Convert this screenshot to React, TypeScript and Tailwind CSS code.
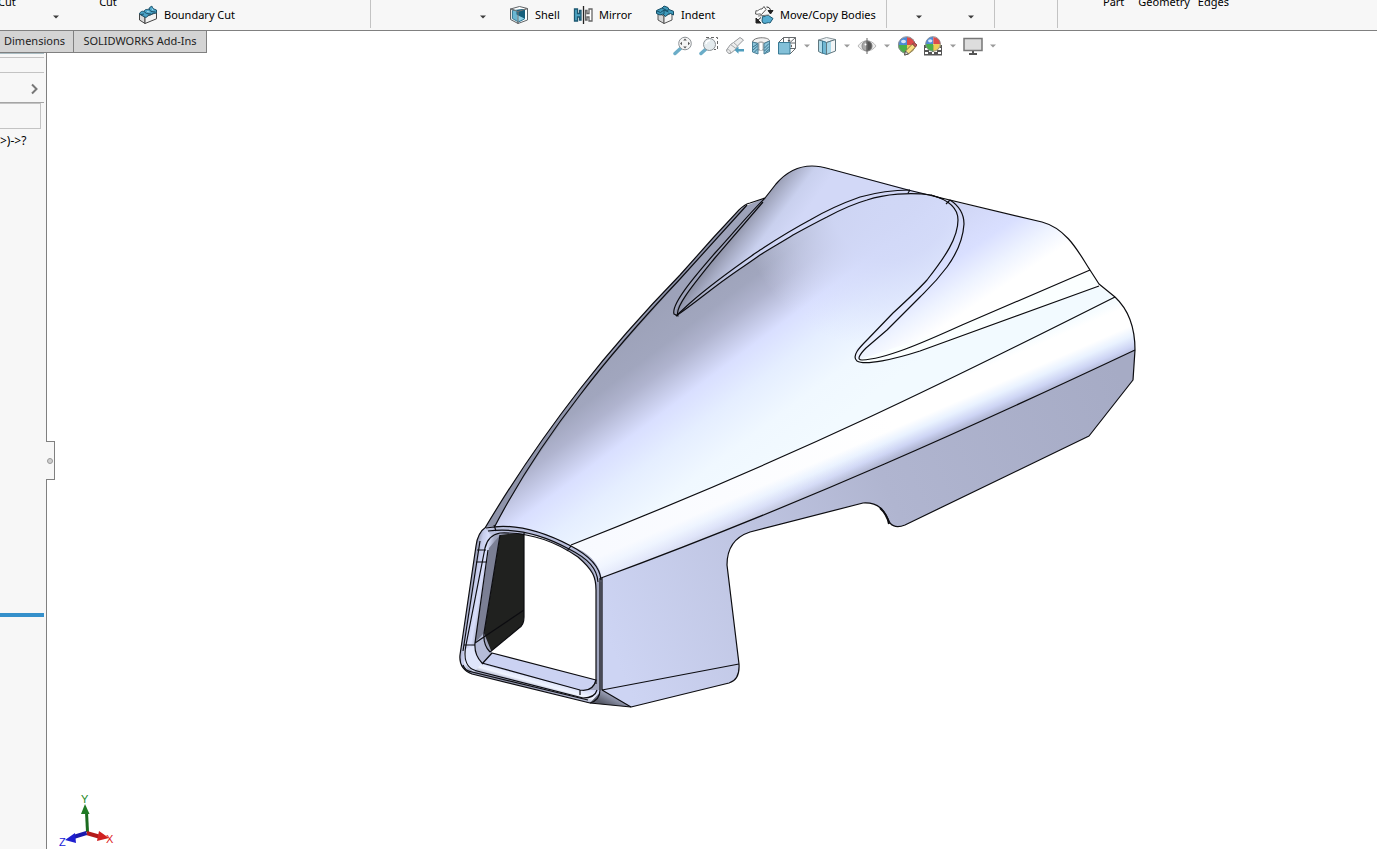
import type { ReactNode } from "react";

interface IconProps {
  children: ReactNode;
}

function Icon({ children }: IconProps) {
  return (
    <svg viewBox="0 0 20 20" className="size-5 shrink-0" fill="none" stroke="#5f6366" aria-hidden="true">
      {children}
    </svg>
  );
}

function Caret({ color = "#3c3c3c" }: { color?: string }) {
  return (
    <svg viewBox="0 0 8 4" className="h-1 w-2" aria-hidden="true">
      <path d="M1 0.5h6L4 3.5z" fill={color} />
    </svg>
  );
}

const boundaryIcon = (
  <Icon>
    <path d="M1.500 9 7 12v6.500L1.500 15z" fill="#d9d9d9" stroke="#444" />
    <path d="M7 12 18.500 7.500v6.300L7 18.500z" fill="#f2f2f2" stroke="#444" />
    <path
      d="M1.500 9c1-3 3-3 4.500-2.500C7 3.500 9.500 5 11 4c.8-2 2-3 3.200-2.500.3 2 2 2.800 4.300 3.500v2.800c-2 1-3-.4-4.500 1.200-1.500 1.500-3 .2-4 1.500-.8 1.800-2 2-3 1.700z"
      fill="#4aa3c7"
      stroke="#1d5068"
    />
    <path d="m6 6.500 2.500 2L13 9M11 4l2 2.500 4.500.5M3 9.500l3-.5" stroke="#1d5068" />
    <path d="M9 6.500 11.500 7M14 3.500l1 2" stroke="#a5dcf0" />
  </Icon>
);

const shellIcon = (
  <Icon>
    <path d="m1.500 4 9-2.500 8 2-9.500 3z" fill="#fff" />
    <path d="M1.500 4 9 6.500v12l-7.500-4z" fill="#e4e4e4" />
    <path d="m9 6.500 9.500-3V15L9 18.500z" fill="#fff" />
    <path d="M3.500 5.500 15.500 4.500v9.500l-6 3-6-3.500z" fill="#6bb7d2" stroke="#3a7f9b" />
    <path d="m8 5.500 7.500-1v8.500L8 9.500z" fill="#155f7c" stroke="#155f7c" />
    <path d="m8 10 7 3.500L9.500 16z" fill="#8fd0e6" stroke="none" />
    <path d="M1.500 4 9 6.500v12M9 6.500l9.500-3" stroke="#777" />
  </Icon>
);

const mirrorIcon = (
  <Icon>
    <path d="M1.500 4h3v4.500h2v-3H8v9.500H6.500v-3h-2V16h-3z" fill="#4ea6c6" stroke="#1c5871" strokeWidth="1.300" />
    <path d="M10.500 1v18" stroke="#222" strokeWidth="1.300" />
    <path d="M19 4h-3v4.500h-2v-3h-1.500v9.500H14v-3h2V16h3z" fill="#fff" stroke="#666" strokeWidth="1.300" />
  </Icon>
);

const indentIcon = (
  <Icon>
    <path d="m3 8 6 3v7.500L3 15z" fill="#d5d5d5" stroke="#555" />
    <path d="m9 11 8-3v7l-8 3.500z" fill="#f4f4f4" stroke="#555" />
    <path d="M1.500 5.500 7 3l2-2 4 1.500 1 2 4.500 1.800V10l-3-1.500-2 .5-3 2.500L8 9l-3 1-3.500-1.500z" fill="#3f9abb" stroke="#164e66" />
    <path d="m2 6 3.500 1.500L9 5l4.500 2M7 3l5 2.500 2-1M9 5v4" stroke="#164e66" />
  </Icon>
);

const moveCopyIcon = (
  <Icon>
    <path d="M2 5.500c2 1.500 3-2 6-1.500l2-2.500 2 3-4.500 5C5 8 4 10 1.500 9z" fill="#fff" stroke="#555" />
    <path d="M8.500 11.500c2.500 1.300 3-2 6-1l4.500 3-3 4.500c-2.500-1.500-4 1.500-7 0l-1-2z" fill="#55acd0" stroke="#1c5871" />
    <path d="M12.500 2c2.500 0 4 1.500 4 4" stroke="#222" />
    <path d="M14 5.500h5L16.500 9zM2 13v5h5zm1 3 4-3.500" fill="#222" stroke="#222" />
    <path d="m4 11 11-1" stroke="#777" />
  </Icon>
);

const zoomFitIcon = (
  <Icon>
    <path d="m2 17.500 5.500-5" stroke="#6badc8" strokeWidth="3.500" strokeLinecap="round" />
    <circle cx="12" cy="7.500" r="6.300" fill="#f5f5f5" stroke="#8d9296" />
    <path d="m12 2.500 1.800 2h-3.600zm0 10 1.800-2h-3.600zM7 7.500l2-1.800v3.600zm10 0-2-1.800v3.600z" fill="#555" stroke="none" />
  </Icon>
);

const zoomAreaIcon = (
  <Icon>
    <path d="M7 1.500h11.500v12H15" strokeDasharray="3 2" stroke="#666" />
    <path d="m2 17.500 5-4.500" stroke="#6badc8" strokeWidth="3.500" strokeLinecap="round" />
    <circle cx="10.500" cy="8.500" r="6" fill="#e4ebee" stroke="#8d9296" />
    <path d="M7 8a4 4 0 0 1 4-3.500" stroke="#fff" strokeWidth="1.500" />
  </Icon>
);

const previousViewIcon = (
  <Icon>
    <path d="m1.500 14 4-5.500 3-2L15 1.500l3.500 2.500-6 6-1.500 3-5.500 4.500c-2 .5-4-1.500-4-3.500z" fill="#ededed" stroke="#96999c" />
    <path d="m5.500 8.500 5.500 4M8.500 6.500l4 3.500M2 14c1.500-1 3.500 0 3.500 3" stroke="#a5a8aa" />
    <path d="m9.500 14 4-3.500V13h5.500v2.500h-5.500v2.300z" fill="#4f9dbd" stroke="none" />
  </Icon>
);

const sectionIcon = (
  <Icon>
    <path d="M1.500 6C2 .5 18.500.5 18.500 5l-5.500 2.500H7z" fill="#f1f1f1" stroke="#777" />
    <path d="M7 7.500c0-2 6-2 6 0V14H7z" fill="#d7d9da" stroke="#999" />
    <path d="M10 7v7" stroke="#fff" strokeWidth="2" />
    <path d="m1.500 6 5.500 1.500v10.500l-5.500-2zM13 7.500 18.500 5v10.500L13 18z" fill="#8cc5db" stroke="#4b7f96" />
    <path d="m2 11 4.500-3m-4.500 6 4.500-4m-3 6 3-3m7-1 4.500-4.500M13.500 15l4.500-4.500m-3.500 6 3.500-3" stroke="#39718a" />
  </Icon>
);

const orientationIcon = (
  <Icon>
    <path d="M6.500 1.500h12v11h-12zM1.500 6.500l5-5M13 6.500l5.500-5M13 18l5.500-5.500M12 1.500v5M18 7h-5" stroke="#65696c" />
    <path d="m10.500 4 1.500 2 1.500-2zM15 8.500 13.500 10l1.500 1.500z" fill="#555" stroke="none" />
    <path d="M1.500 6.500H13V18H1.500z" fill="#83c0d8" stroke="#397a95" />
  </Icon>
);

const displayStyleIcon = (
  <Icon>
    <path d="m1.500 4 8-2.500 9 2-9 3z" fill="#edf2f4" stroke="#8a979c" />
    <path d="m1.500 4 4 1v12.500l-4-2z" fill="#b0dbe9" stroke="#60777f" />
    <path d="m5.500 5 4 1.500v12l-4-1.500z" fill="#71b8d3" stroke="#397a95" />
    <path d="m9.500 6.500 4.500-1.500v12l-4.500 1.500z" fill="#a8d8e8" stroke="none" />
    <path d="m14 5 4.500-1.500V15L14 17z" fill="#f3f5f6" stroke="none" />
    <path d="m9.500 6.500 9-3V15l-9 3.500z" stroke="#60777f" />
  </Icon>
);

const hideShowIcon = (
  <Icon>
    <path d="M1 10c4.500-7 13.500-7 18 0-4.500 6.500-13.500 6.500-18 0z" fill="#ededed" stroke="#b9b9b9" />
    <path d="M10 5v10a5 5 0 0 1 0-10z" fill="#aaa" stroke="#888" />
    <path d="M10 5v10a5 5 0 0 0 0-10z" fill="#555" stroke="#777" />
    <path d="M10 2v16" stroke="#666" />
    <circle cx="8.500" cy="8.500" r="1" fill="#fff" stroke="none" />
  </Icon>
);

const ball = (
  <>
    <path d="M10 9V1a8.500 8.500 0 0 0-9 8z" fill="#4e8ad8" stroke="none" />
    <path d="M10 9V1a8.500 8.500 0 0 1 8.500 8z" fill="#dc4b4b" stroke="none" />
    <path d="M10 9v8.500A8.500 8.500 0 0 1 1 9z" fill="#4aaf4b" stroke="none" />
    <path d="M10 9v8.500A8.500 8.500 0 0 0 18.500 9z" fill="#efcd55" stroke="none" />
    <circle cx="9.700" cy="9" r="8.300" stroke="#8b8f92" />
    <ellipse cx="6.500" cy="5.500" rx="2.500" ry="1.800" fill="#d6e6fa" stroke="none" />
  </>
);

const appearanceIcon = (
  <Icon>
    {ball}
    <path d="m8.500 15 7-7 3 3-7 7-4 1z" fill="#f8df83" stroke="#8b7440" />
    <path d="m15.500 8 1.500-1.500 3 2.500-1.500 2z" fill="#c95858" stroke="#884040" />
    <path d="m8.500 15 3 3-4 1z" fill="#ddd" stroke="#555" />
  </Icon>
);

const sceneIcon = (
  <Icon>
    <path d="M1 9h18v10.500H1z" fill="#555" stroke="none" />
    <path d="M2 12h3v2H2zm0 4h3v2H2zm4-2h3v2H6zm5 0h3v2h-3zm4-2h3v2h-3zm0 4h3v2h-3zm-6 0h2v2H9z" fill="#fff" stroke="none" />
    <g transform="translate(1.500 0) scale(.88)">{ball}</g>
  </Icon>
);

const viewSettingsIcon = (
  <Icon>
    <path d="M1 2.500h18v12H1z" fill="#ddd" stroke="#777" strokeWidth="1.500" />
    <path d="M10 15v2.500M6 18h8" stroke="#555" strokeWidth="2" />
  </Icon>
);

interface HudItem {
  label: string;
  icon?: ReactNode;
}

const hudItems: HudItem[] = [
  { label: "Zoom to Fit", icon: zoomFitIcon },
  { label: "Zoom to Area", icon: zoomAreaIcon },
  { label: "Previous View", icon: previousViewIcon },
  { label: "Section View", icon: sectionIcon },
  { label: "View Orientation", icon: orientationIcon },
  { label: "View Orientation options" },
  { label: "Display Style", icon: displayStyleIcon },
  { label: "Display Style options" },
  { label: "Hide/Show Items", icon: hideShowIcon },
  { label: "Hide/Show Items options" },
  { label: "Edit Appearance", icon: appearanceIcon },
  { label: "Apply Scene", icon: sceneIcon },
  { label: "Apply Scene options" },
  { label: "View Settings", icon: viewSettingsIcon },
  { label: "View Settings options" },
];

function RibbonButton({ icon, label }: { icon: ReactNode; label: string }) {
  return (
    <button className="flex h-7 items-center gap-1.5 pt-0.5 whitespace-nowrap">
      {icon}
      {label}
    </button>
  );
}

// Label of a tall ribbon button, its icon is scrolled off above
function TallLabel({ label }: { label: string }) {
  return <button className="-mt-1.5 h-4 leading-4 whitespace-nowrap">{label}</button>;
}

function CaretButton({ label }: { label: string }) {
  return (
    <button aria-label={label} className="mt-[15px] flex h-2 w-4 justify-center">
      <Caret />
    </button>
  );
}

function Ribbon() {
  return (
    <header className="flex h-[31px] shrink-0 items-start overflow-hidden border-b border-[#808080] bg-[#f7f7f7]">
      <div className="grid h-7 w-[371px] shrink-0 grid-cols-[14px_84px_20px_auto] items-start border-r border-[#c3c3c3]">
        <div className="-ml-0.5 flex">
          <TallLabel label="Cut" />
        </div>
        <div className="flex justify-center">
          <CaretButton label="Hole Wizard options" />
        </div>
        <TallLabel label="Cut" />
        <div className="pl-5">
          <RibbonButton icon={boundaryIcon} label="Boundary Cut" />
        </div>
      </div>
      <div className="flex h-7 w-[516px] shrink-0 items-start border-r border-[#c3c3c3] pl-26">
        <CaretButton label="Pattern options" />
        <div className="ml-[18px] grid grid-cols-[64px_82px_99px_auto]">
          <RibbonButton icon={shellIcon} label="Shell" />
          <RibbonButton icon={mirrorIcon} label="Mirror" />
          <RibbonButton icon={indentIcon} label="Indent" />
          <RibbonButton icon={moveCopyIcon} label="Move/Copy Bodies" />
        </div>
      </div>
      <div className="flex h-7 w-27 shrink-0 gap-9 border-r border-[#c3c3c3] pl-6">
        <CaretButton label="Reference Geometry options" />
        <CaretButton label="Curves options" />
      </div>
      <div className="h-7 w-[63px] shrink-0 border-r border-[#c3c3c3]" />
      <div className="flex gap-x-3.5 pl-[45px]">
        <TallLabel label="Part" />
        <TallLabel label="Geometry" />
        <div className="-ml-1.5 flex">
          <TallLabel label="Edges" />
        </div>
      </div>
    </header>
  );
}

function HeadsUpToolbar() {
  return (
    <div className="ml-[466px] flex h-[22px] items-end gap-1.5">
      {hudItems.map((item) => (
        <button key={item.label} aria-label={item.label} className="-mb-[3px] flex h-5 items-center">
          {item.icon ?? <Caret color="#9a9a9a" />}
        </button>
      ))}
    </div>
  );
}

function SidePanel() {
  return (
    <aside className="w-[47px] shrink-0 overflow-hidden border-r border-[#808080] bg-[#f7f7f7]">
      <div className="mr-0.5">
        <div className="h-[5px] border-t border-b border-t-[#a9bcc2] border-b-[#c3c3c3]" />
        <div className="h-[15px] border-b border-[#c3c3c3]" />
        <button
          aria-label="More tabs"
          className="flex h-[30px] w-full items-center justify-end border-b border-[#a5a5a5] pt-0.5 pr-1.5"
        >
          <svg viewBox="0 0 7 12" className="h-3 w-[7px]" aria-hidden="true">
            <path d="m1 1.500 4.500 4.500L1 10.500" fill="none" stroke="#777" strokeWidth="2" />
          </svg>
        </button>
      </div>
      <input
        aria-label="Filter"
        className="block h-[26px] w-[41px] border border-l-0 border-[#c3c3c3] bg-[#f7f7f7] px-1 outline-none"
      />
      <p className="mt-1 h-4 text-xs leading-4 whitespace-nowrap [font-variant-ligatures:none]">{">)->?"}</p>
      <div className="mt-[464px] mr-[2px] h-1 bg-[#3590cb]" />
    </aside>
  );
}

function HoodModel() {
  return (
    <svg viewBox="47 53 1330 796" className="block size-full" role="img" aria-label="Hood model">
      <defs>
        <linearGradient id="top" gradientUnits="userSpaceOnUse" x1="600" y1="350" x2="720" y2="510">
          <stop offset="0" stopColor="#9da2b9" />
          <stop offset=".17" stopColor="#a1a6be" />
          <stop offset=".27" stopColor="#b0b4cf" />
          <stop offset=".44" stopColor="#d9dfff" />
          <stop offset=".6" stopColor="#e5eeff" />
          <stop offset=".8" stopColor="#f0f8ff" />
          <stop offset="1" stopColor="#f2faff" />
        </linearGradient>
        <radialGradient id="crest" gradientUnits="userSpaceOnUse" cx="890" cy="200" r="150">
          <stop offset="0" stopColor="#d0d7f6" />
          <stop offset=".4" stopColor="#d2d9f8" stopOpacity=".9" />
          <stop offset=".7" stopColor="#d6ddfb" stopOpacity=".5" />
          <stop offset="1" stopColor="#dbe2ff" stopOpacity="0" />
        </radialGradient>
        <linearGradient id="band" gradientUnits="userSpaceOnUse" x1="860" y1="413" x2="883" y2="466">
          <stop offset="0" stopColor="#f6fcff" />
          <stop offset=".15" stopColor="#ffffff" />
          <stop offset=".48" stopColor="#ffffff" />
          <stop offset=".65" stopColor="#e9f2ff" />
          <stop offset=".82" stopColor="#cdd4f4" />
          <stop offset="1" stopColor="#a4a9c4" />
        </linearGradient>
        <linearGradient id="bandFade" gradientUnits="userSpaceOnUse" x1="600" y1="570" x2="900" y2="440">
          <stop offset="0" stopColor="#f4f7ff" stopOpacity=".65" />
          <stop offset="1" stopColor="#f4f7ff" stopOpacity="0" />
        </linearGradient>
        <linearGradient id="side" gradientUnits="userSpaceOnUse" x1="600" y1="620" x2="1130" y2="400">
          <stop offset="0" stopColor="#cdd4f3" />
          <stop offset=".3" stopColor="#bec4e1" />
          <stop offset=".55" stopColor="#b0b5d0" />
          <stop offset="1" stopColor="#a6abc5" />
        </linearGradient>
        <linearGradient id="leftCowl" gradientUnits="userSpaceOnUse" x1="760" y1="197" x2="796" y2="224">
          <stop offset="0" stopColor="#8d91a6" />
          <stop offset=".2" stopColor="#a3a8c0" />
          <stop offset=".6" stopColor="#c9d0ee" />
          <stop offset="1" stopColor="#d2d8f7" />
        </linearGradient>
        <linearGradient id="rightCowl" gradientUnits="userSpaceOnUse" x1="960" y1="207" x2="1010" y2="282">
          <stop offset="0" stopColor="#d0d6f5" />
          <stop offset=".45" stopColor="#d9dfff" />
          <stop offset=".75" stopColor="#eef3ff" />
          <stop offset="1" stopColor="#ffffff" />
        </linearGradient>
        <linearGradient id="tube" gradientUnits="userSpaceOnUse" x1="466" y1="600" x2="484" y2="603">
          <stop offset="0" stopColor="#8a8ea5" />
          <stop offset=".35" stopColor="#c7cdec" />
          <stop offset=".65" stopColor="#d9dffb" />
          <stop offset="1" stopColor="#a0a5be" />
        </linearGradient>
        <linearGradient id="sill" gradientUnits="userSpaceOnUse" x1="528" y1="672" x2="523" y2="690">
          <stop offset="0" stopColor="#cfd6f5" />
          <stop offset=".45" stopColor="#f1f5ff" />
          <stop offset=".7" stopColor="#a9aec8" />
          <stop offset="1" stopColor="#4c4f5c" />
        </linearGradient>
        <linearGradient id="corner" gradientUnits="userSpaceOnUse" x1="616" y1="690" x2="608" y2="706">
          <stop offset="0" stopColor="#c3c9e6" />
          <stop offset="1" stopColor="#565a68" />
        </linearGradient>
      </defs>

      {/* Shaded faces */}
      <path
        d="M601 578C800 505 980 423 1135 350L1133 380 1089 436 905 525Q895 529 890 523C884 510 879 502 863 503L750 532C735 537 727 548 727 565L739 664Q740 680 729 683L631 707 602 690Z"
        fill="url(#side)"
      />
      <path
        d="M571 545C800 455 960 375 1115 297 1130 311 1135 330 1135 350 980 423 800 505 601 578 599 562 588 552 571 545Z"
        fill="url(#band)"
      />
      <path
        d="M571 545C800 455 960 375 1115 297 1130 311 1135 330 1135 350 980 423 800 505 601 578 599 562 588 552 571 545Z"
        fill="url(#bandFade)"
      />
      <path
        d="M485 528C510 486 542 438 580 389 605 357 645 311 680 275L713 238 743 207 765 198 830 180 908 190 960 204 1098 286 1115 297C960 375 800 455 571 545 545 532 520 525 496 527Z"
        fill="url(#top)"
      />
      <path d="M727 278 830 180 908 190 960 204 1040 250V360H740Z" fill="url(#crest)" />
      <path
        d="M676 316C670 312 695 282 715 258L765 198 778 181C790 170 800 166 812 166Q820 166 830 169L931 195C905 190 885 194 867 200 853 204 840 210 827 217L793 235 760 255 727 278Z"
        fill="url(#leftCowl)"
      />
      <path
        d="M858 361C850 350 858 347 867 340L893 313 927 280C945 260 957 240 958 222 959 212 956 206 946 200L1042 222C1068 229 1080 255 1090 270L962 325Z"
        fill="url(#rightCowl)"
      />
      <path d="M858 360 962 325 1090 270 1099 286 960 338C920 352 880 364 861 363Z" fill="#fbffff" />
      <path d="M485 528C510 486 542 438 580 389L680 275 743 207 747 205 613 355C580 393 520 478 495 526Z" fill="#8f94aa" />

      {/* Front opening */}
      <path
        d="M498 534 524 533V617Q524 625 519 628L490 652 482 640Z"
        fill="#20211f"
      />
      <path
        d="M486 527C478 532 477 540 476 546L460 655C459 665 464 671 472 674L590 703 602 690 596 680 492 653 484 633 500 535 524 532C545 537 565 548 578 557 593 570 596 577 596 590V684L602 690V580C599 562 588 552 571 546 545 531 510 524 486 527Z"
        fill="url(#tube)"
      />
      <path d="M489 548 500 535 484 633 475 643Z" fill="#7b7f94" />
      <path d="M486 529C520 522 550 534 571 546 592 556 602 567 602 582H596C595 570 588 560 571 550 550 537 525 530 490 534Z" fill="#b9bfdc" />
      <path d="M492 653 596 680Q592 692 580 690L482 664Z" fill="#cbd2f2" />
      <path d="M482 664 580 690 600 690 598 702 588 702 474 673Q466 671 464 662L475 645Z" fill="url(#sill)" />
      <path d="M464 650 475 645Q475 655 482 663L474 672Q463 666 464 650Z" fill="#dfe5fb" />
      <path d="M475 643 484 633Q483 645 491 653L482 663Q475 655 475 643Z" fill="#b6bcd8" />
      <path d="M602 690 631 707 590 703Z" fill="url(#corner)" />

      {/* Edges */}
      <g fill="none" stroke="#0c0c10" strokeWidth="1.200" strokeLinejoin="round">
        <path d="M485 528C510 486 542 438 580 389 605 357 645 311 680 275L713 238 739 210Q745 204 750 203L765 198 776 184C788 170 800 166 812 166Q820 166 830 169L908 190 1042 222C1068 229 1080 255 1090 270L1099 284 1115 297C1130 311 1135 330 1135 350L1133 380 1089 436 905 525Q895 529 890 523C884 510 879 502 863 503L750 532C735 537 727 548 727 565L739 664Q740 680 729 683L631 707 590 703 472 674C464 671 459 665 460 655L476 546C477 538 480 531 486 527" />
        <path d="M495 526C520 478 545 440 580 395 608 358 647 314 680 279L747 205" />
        <path d="M765 198C748 215 735 231 715 253 695 276 671 304 674 314L678 316C674 308 693 285 714 259L763 202" />
        <path d="M676 316 690 303C715 281 737 266 760 250 780 237 795 228 810 220 827 210 843 203 860 197Q885 190 910 190" />
        <path d="M676 316C695 303 710 290 727 278 738 270 749 263 760 255 771 248 782 242 793 235 804 229 815 223 827 217 840 210 853 204 867 200 885 194 910 192 931 195 942 198 958 205 958 220 958 238 945 257 927 280 918 290 905 302 893 313L867 340C860 347 851 356 857 361 865 366 895 359 920 351L1099 286" />
        <path d="M931 195 943 199M950 200Q964 209 964 224C963 240 955 256 947 267 935 283 928 289 920 297L887 330 866 348C860 354 856 360 862 360 885 359 920 344 962 325L1090 270M910 190l-2 3M950 200l-4 4" />
        <path d="M571 545C800 455 960 375 1115 297M601 578C800 505 980 423 1135 350" />
        <path d="M602 578V690L739 664M602 690 631 707M600 578V690Q600 700 590 703M596 684V590C596 577 593 570 578 557 555 541 530 532 500 533Q488 535 485 548L466 645C463 660 467 669 477 671L583 698Q595 698 597 690" />
        <path d="M486 528C515 522 548 534 571 546 590 556 600 567 601 580M488 531C520 527 549 538 569 549 589 559 597 569 598 582M571 546l-4 5M494 525l2 6M480 541l-17 110M500 535 484 633Q483 645 490 652M488 550 475 643Q474 655 482 663L580 690Q593 692 596 680L492 653 482 664M475 643 524 610M524 533V617Q524 625 519 628L490 652M477 550h9M476 562h11M464 645h11M580 690v5M463 665Q465 671 472 672L588 700" />
        <path d="M880 508Q887 514 889 524" strokeWidth="2" />
      </g>
    </svg>
  );
}

function Triad() {
  return (
    <svg viewBox="57 789 60 60" className="absolute bottom-0 left-2.5 size-15" role="img" aria-label="Axes">
      <path d="M85 812h3l1 20h-3z" fill="#1b6b1f" />
      <path d="m85 804 4.500 10h-8.500z" fill="#1f7a24" />
      <path d="m87 831 14 4-1 4-14-4z" fill="#b31a1a" />
      <path d="m99 831 10 7-12 3z" fill="#d02020" />
      <path d="m86 831-13 4 1 4 13-4z" fill="#1a1aae" />
      <path d="m75 833-10 7 11 3z" fill="#1f1fd0" />
      <g fontFamily="Liberation Sans, sans-serif" fontSize="11">
        <text x="81" y="803" fill="#1e8a25">Y</text>
        <text x="106" y="843" fill="#dd1c1c">X</text>
        <text x="59" y="846" fill="#1919d8">Z</text>
      </g>
    </svg>
  );
}

export default function App() {
  return (
    <div className="flex h-screen flex-col overflow-hidden bg-white font-['Noto_Sans',sans-serif] text-[11px] text-black">
      <Ribbon />
      <div className="flex h-[22px] shrink-0 items-start">
        <nav className="flex h-[22px] shrink-0 border-b border-[#808080] bg-[#d4d4d4] text-[#222]">
          <button className="w-[74px] border-r border-[#808080] pl-1 text-left">Dimensions</button>
          <button className="w-[133px] border-r border-[#808080] whitespace-nowrap">SOLIDWORKS Add-Ins</button>
        </nav>
        <HeadsUpToolbar />
      </div>
      <div className="flex min-h-0 flex-1">
        <SidePanel />
        <main className="relative min-w-0 flex-1">
          <HoodModel />
          <Triad />
          <button
            aria-label="Collapse panel"
            className="absolute top-[388px] -left-px flex h-[39px] w-[9px] items-center justify-center border border-l-0 border-[#808080] bg-[#f7f7f7]"
          >
            <span className="size-1.5 rounded-full border border-[#999] bg-[#d0d0d0]" />
          </button>
        </main>
      </div>
    </div>
  );
}
